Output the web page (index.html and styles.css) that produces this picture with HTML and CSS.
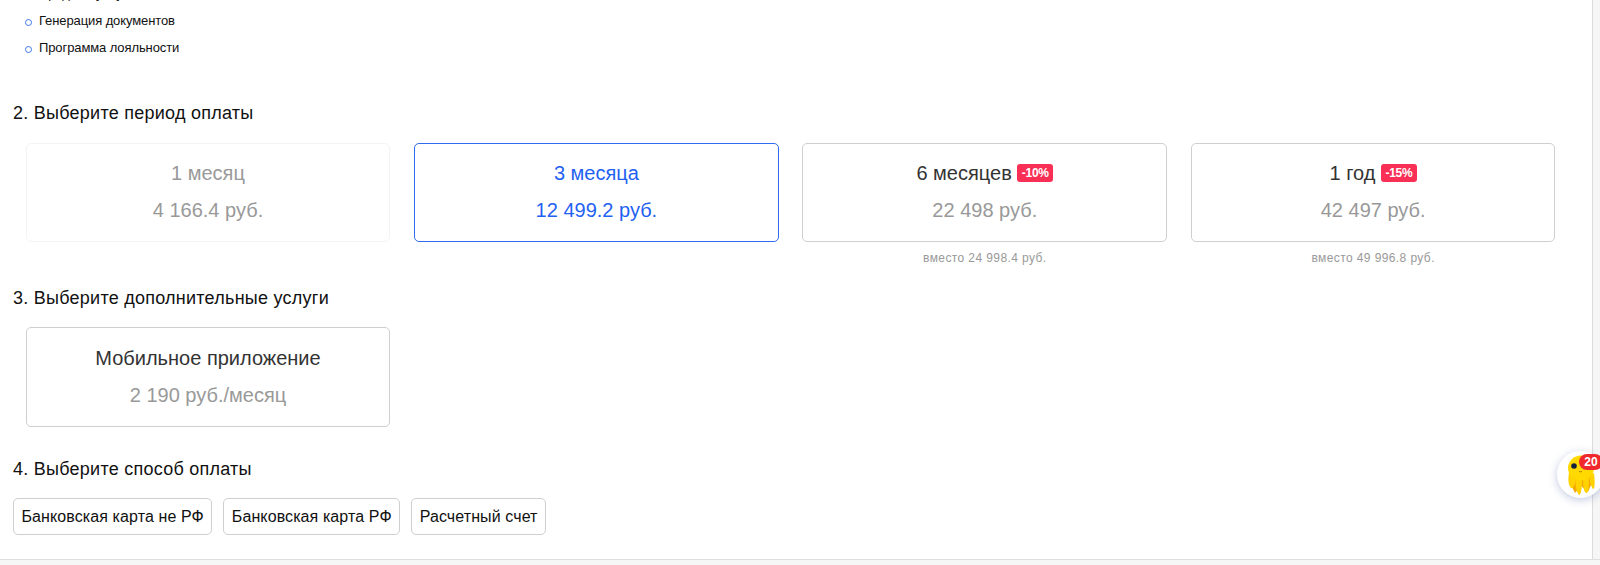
FILE: index.html
```html
<!DOCTYPE html>
<html lang="ru">
<head>
<meta charset="utf-8">
<title>Выбор тарифа</title>
<link rel="stylesheet" href="styles.css">
</head>
<body>
<div class="shell">
  <main class="page">
    <ul class="features">
      <li>Продажа услуг</li>
      <li>Генерация документов</li>
      <li>Программа лояльности</li>
    </ul>

    <h2 class="step step-period">2. Выберите период оплаты</h2>
    <div class="cards cards-period">
      <div class="cell">
        <div class="card card-muted">
          <div class="card-title">1 месяц</div>
          <div class="card-price">4 166.4 руб.</div>
        </div>
      </div>
      <div class="cell">
        <div class="card card-active">
          <div class="card-title">3 месяца</div>
          <div class="card-price">12 499.2 руб.</div>
        </div>
      </div>
      <div class="cell">
        <div class="card">
          <div class="card-title">6 месяцев <span class="badge">-10%</span></div>
          <div class="card-price">22 498 руб.</div>
        </div>
        <div class="note">вместо 24 998.4 руб.</div>
      </div>
      <div class="cell">
        <div class="card">
          <div class="card-title">1 год <span class="badge">-15%</span></div>
          <div class="card-price">42 497 руб.</div>
        </div>
        <div class="note">вместо 49 996.8 руб.</div>
      </div>
    </div>

    <h2 class="step step-extra">3. Выберите дополнительные услуги</h2>
    <div class="cards">
      <div class="cell">
        <div class="card card-tall">
          <div class="card-title">Мобильное приложение</div>
          <div class="card-price">2 190 руб./месяц</div>
        </div>
      </div>
    </div>

    <h2 class="step step-pay">4. Выберите способ оплаты</h2>
    <div class="methods">
      <button class="method">Банковская карта не РФ</button>
      <button class="method">Банковская карта РФ</button>
      <button class="method">Расчетный счет</button>
    </div>
  </main>
  <div class="gutter"></div>
</div>
<footer class="footer"></footer>

<div class="chat">
  <svg class="octopus" viewBox="0 0 28 40" width="28" height="40" aria-hidden="true">
    <path fill="#f5a800" d="M5 18h18l1 12-3 7-7-6-6 7-4-8z"/>
    <path fill="#ffd200" d="M2 17C1 24 1 30 4 33c2 1 4-3 5-9z"/>
    <path fill="#ffd200" d="M9 22c-1 8 0 14 3 18 2 0 3-6 3-16z"/>
    <path fill="#ffd200" d="M16 24c0 8 1 13 3 14 3 0 3-8 3-16z"/>
    <path fill="#ffd200" d="M22 20c1 6 2 12 4 14 2 0 2-8 1-16z"/>
    <ellipse cx="14" cy="13" rx="13" ry="12.5" fill="#ffd900"/>
    <circle cx="7" cy="11" r="2.8" fill="#14213d"/>
    <path d="M12 16c1 1.2 2 1.2 3 0" fill="none" stroke="#a87400" stroke-width="1"/>
  </svg>
  <span class="chat-count">20</span>
</div>
</body>
</html>
```

FILE: styles.css
```css
* { box-sizing: border-box; }

html, body {
  margin: 0;
  padding: 0;
  height: 565px;
  overflow: hidden;
  background: #fff;
}

body {
  position: relative;
  display: flex;
  flex-direction: column;
  font-family: "Liberation Sans", Arial, sans-serif;
  color: #111;
}

.shell {
  display: flex;
  height: 559px;
}

.page {
  flex: 1;
  min-width: 0;
  padding: 0 0 0 13px;
  overflow: hidden;
}

.gutter {
  flex: 0 0 8px;
  border-left: 1px solid #dcdcdc;
  background: #f6f6f6;
}

.features {
  list-style: none;
  margin: -13px 0 0;
  padding: 0 0 0 12px;
  font-size: 13px;
  line-height: 14px;
  letter-spacing: -0.1px;
}

.features li {
  position: relative;
  margin-bottom: 13px;
  padding-left: 14px;
}

.features li::before {
  content: "";
  position: absolute;
  left: 0;
  top: 5px;
  width: 5px;
  height: 5px;
  border: 1px solid #3f78f0;
  border-radius: 50%;
}

.step {
  margin: 0;
  font-size: 18px;
  font-weight: 400;
  line-height: 20px;
  letter-spacing: 0.25px;
  color: #111;
}

.step-period { margin-top: 48px; }
.step-extra { margin-top: 23px; }
.step-pay { margin-top: 32px; }

.cards {
  display: grid;
  grid-template-columns: repeat(4, 364.6px);
  column-gap: 23.8px;
  margin-top: 19px;
  padding-left: 12.7px;
}

.cards-period { margin-top: 20px; }

.cell { min-width: 0; }

.card {
  height: 99px;
  padding-top: 17px;
  border: 1px solid #cfcfcf;
  border-radius: 5px;
  text-align: center;
  background: #fff;
}

.card-tall {
  height: 100px;
  padding-top: 18px;
}

.card-title {
  height: 24px;
  font-size: 20px;
  line-height: 24px;
  color: #333;
}

.card-price {
  margin-top: 13px;
  font-size: 20px;
  line-height: 24px;
  color: #999;
}

.card-muted { border-color: #f4f4f4; }
.card-muted .card-title { color: #999; }

.card-active { border-color: #2f6bf0; }
.card-active .card-title,
.card-active .card-price { color: #1f62f2; }

.badge {
  display: inline-block;
  height: 18px;
  padding: 0 4.5px;
  border-radius: 3px;
  background: #f92f55;
  color: #fff;
  font-size: 12px;
  font-weight: 700;
  line-height: 18px;
  letter-spacing: -0.3px;
  vertical-align: 3px;
}

.note {
  margin-top: 9px;
  font-size: 12px;
  line-height: 14px;
  letter-spacing: 0.4px;
  text-align: center;
  color: #999;
}

.methods {
  display: flex;
  gap: 11px;
  margin-top: 19px;
}

.method {
  height: 37px;
  padding: 0 7.5px;
  border: 1px solid #cfcfcf;
  border-radius: 5px;
  background: #fff;
  font-family: inherit;
  font-size: 16px;
  letter-spacing: 0.1px;
  color: #111;
}

.footer {
  height: 6px;
  border-top: 1px solid #dedede;
  background: #f6f6f6;
}

.chat {
  position: absolute;
  left: 1557px;
  top: 451px;
  width: 47px;
  height: 47px;
  border-radius: 50%;
  background: #fff;
  box-shadow: 0 2px 8px rgba(60, 80, 160, 0.3);
}

.octopus {
  position: absolute;
  left: 10px;
  top: 4px;
}

.chat-count {
  position: absolute;
  left: 22px;
  top: 3px;
  width: 24px;
  height: 16px;
  border-radius: 8px;
  background: #f0282d;
  color: #fff;
  font-size: 12px;
  font-weight: 700;
  line-height: 16px;
  text-align: center;
}
```
